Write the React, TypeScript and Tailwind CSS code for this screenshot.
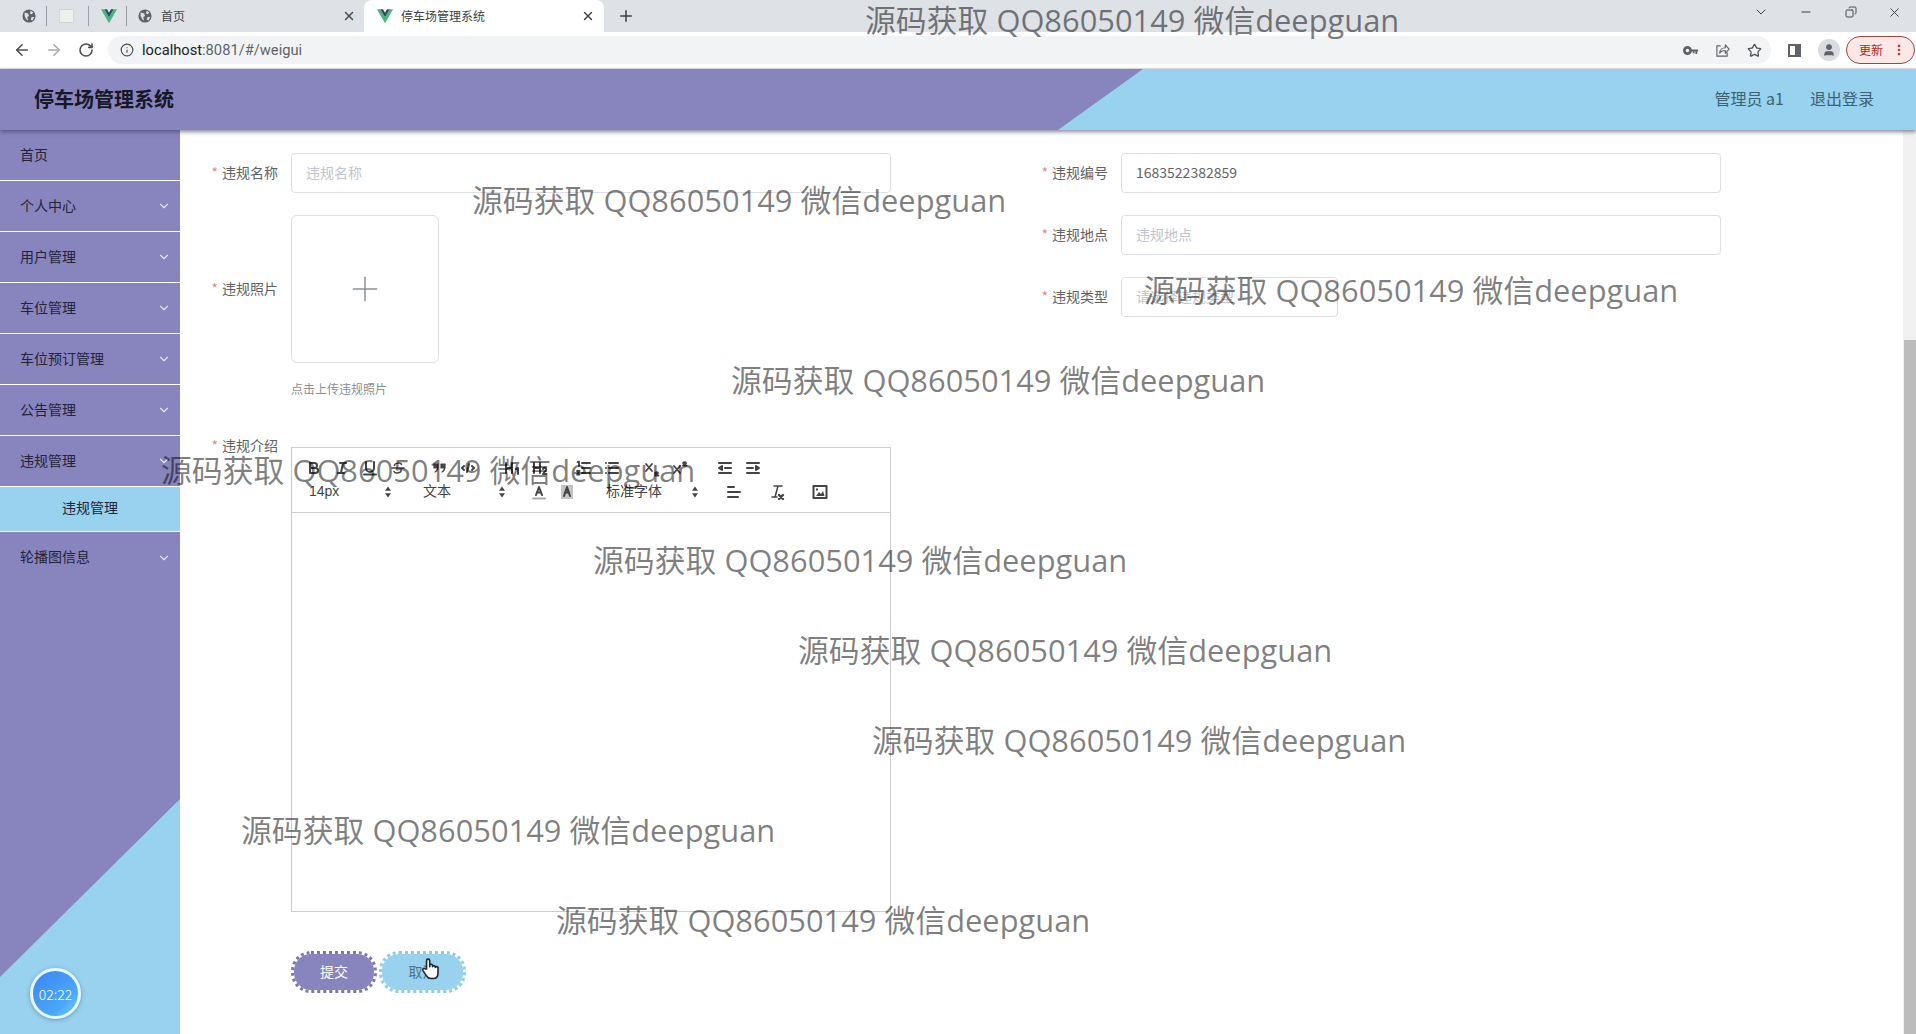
import { ArrowLeft, ArrowRight, ChevronDown, Copy, Info, Minus, MoreVertical, Plus, RotateCw, Star, User, X } from "lucide-react";

const watermarks = [
  { x: 865, y: 1 },
  { x: 161, y: 91 },
  { x: 472, y: 181 },
  { x: 1144, y: 271 },
  { x: 731, y: 361 },
  { x: 161, y: 451 },
  { x: 593, y: 541 },
  { x: 798, y: 631 },
  { x: 872, y: 721 },
  { x: 241, y: 811 },
  { x: 556, y: 901 },
];

const menu = ["个人中心", "用户管理", "车位管理", "车位预订管理", "公告管理", "违规管理"];

function Globe() {
  return (
    <svg viewBox="0 0 16 16" className="w-[14px] h-[14px]">
      <circle cx="8" cy="8" r="7.5" fill="#5f6368" />
      <path d="M3 4l4 1 1 3-2 1 1 4-2-1-2-4zM10 2l3 2-2 2-2-1zM11 9l3 0-2 4-2-1z" fill="#dee1e6" />
    </svg>
  );
}

function VueLogo() {
  return (
    <svg viewBox="0 0 24 22" className="w-4 h-4">
      <path d="M0 1h5l7 12 7-12h5L12 22z" fill="#41b883" />
      <path d="M5 1h4l3 5 3-5h4l-7 12z" fill="#34495e" />
    </svg>
  );
}

function Tabs() {
  return (
    <div className="h-8 bg-[#dee1e6] flex items-center relative">
      <div className="w-[56px] flex justify-end pr-[9px]">
        <div className="flex items-center gap-[10px]">
          <Globe />
          <div className="w-px h-5 bg-[#9aa0a6]" />
        </div>
      </div>
      <div className="w-[33px] flex items-center justify-between pl-[3px]">
        <div className="w-[15px] h-[14px] bg-[#eef0ee] border border-[#d4d6d4]" />
        <div className="w-px h-5 bg-[#9aa0a6]" />
      </div>
      <div className="w-[38px] flex items-center justify-between pl-[12px]">
        <VueLogo />
        <div className="w-px h-5 bg-[#9aa0a6]" />
      </div>
      <div className="w-[237px] flex items-center pl-[11px] text-xs text-[#45474a]">
        <Globe />
        <span className="ml-[9px] flex-1">首页</span>
        <X className="w-[14px] h-[14px] mr-[8px]" strokeWidth={2.5} />
      </div>
      <div className="w-[240px] h-8 bg-white rounded-t-lg flex items-center pl-[13px] text-xs text-[#3c4043]">
        <VueLogo />
        <span className="ml-[8px] flex-1">停车场管理系统</span>
        <X className="w-[14px] h-[14px] mr-[9px]" strokeWidth={2.5} />
      </div>
      <Plus className="w-[18px] h-[18px] ml-[13px] text-[#3c4043]" strokeWidth={2} />
      <div className="ml-auto flex items-center text-[#3c4043] h-full pb-2">
        <ChevronDown className="w-4 h-4 mr-[30px]" strokeWidth={1.5} />
        <Minus className="w-[14px] h-[14px] mr-[32px]" strokeWidth={1.8} />
        <Copy className="w-3 h-3 mr-[30px] -scale-x-100" strokeWidth={1.8} />
        <X className="w-[15px] h-[15px] mr-[14px]" strokeWidth={1.5} />
      </div>
    </div>
  );
}

function Toolbar() {
  return (
    <div className="h-[37px] bg-white border-b border-[#dfe1e5] flex items-center text-[#5f6368]">
      <ArrowLeft className="w-[18px] h-[18px] ml-[13px] text-[#4c5054]" strokeWidth={2.2} />
      <ArrowRight className="w-[18px] h-[18px] ml-[14px] text-[#a8abaf]" strokeWidth={2.2} />
      <RotateCw className="w-4 h-4 ml-[15px] text-[#4c5054]" strokeWidth={2.4} />
      <div className="ml-[14px] w-[1663px] h-7 rounded-full bg-[#f1f3f4] flex items-center pl-[12px]">
        <Info className="w-[14px] h-[14px] text-[#4c5054]" strokeWidth={2} />
        <span className="ml-[8px] text-[14.7px] text-[#202124] font-['Roboto',sans-serif]">
          localhost<span className="text-[#5f6368]">:8081/#/weigui</span>
        </span>
        <div className="ml-auto flex items-center pr-[9px]">
          <svg viewBox="0 0 18 12" className="w-[16px] h-[11px] mr-[16px]">
            <circle cx="5" cy="6" r="3.500" fill="none" stroke="#5f6368" strokeWidth="3" />
            <path d="M8 5h9v2h-1v3h-2V7h-1v2h-2V7H8z" fill="#5f6368" />
          </svg>
          <svg viewBox="0 0 16 16" className="w-[15px] h-[15px] mr-[17px]" fill="none" stroke="#5f6368" strokeWidth="1.200">
            <path d="M6 3H2v11h11v-4M5 11c0-4 3-6 6-6V2l4 4.500-4 4.500V8c-3 0-5 1-6 3z" strokeLinejoin="round" />
          </svg>
          <Star className="w-[15px] h-[15px] text-[#4c5054]" strokeWidth={2} />
        </div>
      </div>
      <div className="ml-[17px] w-[13px] h-[13px] border-[2px] border-[#5f6368] border-r-[6px]" />
      <div className="ml-[17px] w-[22px] h-[22px] rounded-full bg-[#dadce0] flex items-center justify-center">
        <User className="w-[14px] h-[14px] text-[#5f6368] fill-[#5f6368]" />
      </div>
      <div className="ml-[6px] w-[69px] h-7 rounded-full bg-[#fce8e6] border border-[#a5443a] flex items-center pl-[12px] text-xs text-[#b3261e]">
        更新
        <MoreVertical className="w-[14px] h-[14px] ml-[9px] text-[#a5443a]" strokeWidth={2.5} />
      </div>
    </div>
  );
}

function Header() {
  return (
    <div className="h-[61px] bg-[#8884bd] relative flex items-center justify-between shadow-[0_2px_4px_rgba(60,60,90,0.6)] z-10">
      <div className="absolute inset-0 bg-[#98d2ee] [clip-path:polygon(1143px_0,100%_0,100%_100%,1058px_100%)]" />
      <div className="relative pl-[34px] pb-[2px] text-xl font-bold text-[#171728]">停车场管理系统</div>
      <div className="relative pr-[42px] pb-[3px] flex gap-[26px] text-base text-[#3d6273]">
        <span>管理员 a1</span>
        <span>退出登录</span>
      </div>
    </div>
  );
}

function Sidebar() {
  return (
    <div className="w-[180px] shrink-0 bg-[#8884bd] relative text-sm text-[#23233c]">
      <div className="absolute inset-0 bg-[#98d2ee] [clip-path:polygon(180px_669px,0_847px,0_904px,180px_904px)]" />
      <div className="relative">
        <div className="h-[51px] flex items-center pl-5 border-b border-white">
          <span className="-mt-[3px]">首页</span>
        </div>
        {menu.map((m) => (
          <div key={m} className="h-[51px] flex items-center justify-between pl-5 pr-[9px] border-b border-white last:border-b-0">
            <span className="-mt-[3px]">{m}</span>
            <ChevronDown className="w-[14px] h-[14px] text-[#e4e4f4]" strokeWidth={2} />
          </div>
        ))}
        <div className="h-[45px] flex items-center justify-center bg-[#98d2ee] border-b border-white">
          <span className="-mt-[5px]">违规管理</span>
        </div>
        <div className="h-[51px] flex items-center justify-between pl-5 pr-[9px]">
          <span className="-mt-[4px]">轮播图信息</span>
          <ChevronDown className="w-[14px] h-[14px] text-[#e4e4f4]" strokeWidth={2} />
        </div>
      </div>
      <div className="absolute left-[30px] top-[838px] w-[51px] h-[51px] rounded-full border-[3px] border-[#e6f6fb] bg-[linear-gradient(135deg,#3a84f2,#4aa8fa_70%,#7cc8fb)] shadow-[0_1px_4px_rgba(60,100,140,0.5)] flex items-center justify-center text-sm font-light text-white">
        02:22
      </div>
    </div>
  );
}

function FormRow({ label, top, children }: { label: string; top?: boolean; children: React.ReactNode }) {
  return (
    <div className={`flex ${top ? "items-start" : "items-center"}`}>
      <label className={`w-[98px] shrink-0 text-right text-sm text-[#606266] ${top ? "-mt-[12px]" : "pb-[3px]"}`}>
        <span className="text-[#e08a8a] mr-1">*</span>
        {label}
      </label>
      <div className="ml-[13px]">{children}</div>
    </div>
  );
}

function TextBox({ width, placeholder, value }: { width: string; placeholder?: string; value?: string }) {
  return (
    <div className={`${width} h-10 rounded border border-[#dcdfe6] bg-white flex items-center pl-[14px] pb-[3px] text-sm`}>
      {value ? <span className="text-[#606266]">{value}</span> : <span className="text-[#c0c4cc]">{placeholder}</span>}
    </div>
  );
}

function Q({ children, className = "" }: { children: React.ReactNode; className?: string }) {
  return (
    <svg
      viewBox="0 0 18 18"
      fill="none"
      stroke="#444"
      strokeWidth="2"
      strokeLinecap="round"
      strokeLinejoin="round"
      className={`w-[28px] h-6 py-[3px] px-[5px] ${className}`}
    >
      {children}
    </svg>
  );
}

function Picker({ label, width }: { label: string; width: string }) {
  return (
    <div className={`${width} h-6 flex items-center justify-between pl-[9px] pr-[1px] text-sm text-[#444] font-['Liberation_Sans','Noto_Sans_CJK_SC',sans-serif]`}>
      <span className="pb-[2px]">{label}</span>
      <svg viewBox="0 0 18 18" className="w-[18px] h-[18px]" fill="#444">
        <polygon points="9 3.500 12 7.800 6 7.800" />
        <polygon points="9 14.500 12 10.200 6 10.200" />
      </svg>
    </div>
  );
}

function Editor() {
  return (
    <div className="w-[600px] h-[465px] border border-[#ccc] flex flex-col">
      <div className="h-[65px] border-b border-[#ccc] p-2 shrink-0">
        <div className="flex h-6 items-center">
          <Q>
            <path d="M5 4h4.500a2.500 2.500 0 0 1 0 5H5zM5 9h5.500a2.500 2.500 0 0 1 0 5H5z" />
          </Q>
          <Q>
            <path d="M7 4h6M5 14h6M8 14l2-10" />
          </Q>
          <Q>
            <path d="M5 3v6a4 4 0 0 0 8 0V3M3 15.500h12" />
          </Q>
          <Q>
            <path d="M3 9h12M5.500 6.500C5.500 4 12 3 12.500 5.500M12 11c1 3-6 4-7 1.500" strokeWidth="1.500" />
          </Q>
          <Q className="ml-[14px]">
            <path d="M3 5h4v4H3zM10 5h4v4h-4zM7 8c0 3-1 4-3 5M14 8c0 3-1 4-3 5" fill="#444" strokeWidth="1.200" />
          </Q>
          <Q>
            <path d="M5 7 3 9l2 2M13 7l2 2-2 2M10 5 8 13" />
          </Q>
          <Q className="ml-4">
            <path d="M3 4v10M9 4v10M3 9h6M13 10l2-1v6" />
          </Q>
          <Q>
            <path d="M3 4v10M9 4v10M3 9h6M12 10c1-2 4-1 3 1l-3 4h3.500" />
          </Q>
          <Q className="ml-4">
            <path d="M7 4h8M7 9h8M7 14h8M2.500 3 4 2.500V7M2 12h2.500L2 15.500h2.500" strokeWidth="1.800" />
          </Q>
          <Q>
            <path d="M6 4h9M6 9h9M6 14h9M3 4h0M3 9h0M3 14h0" />
          </Q>
          <Q className="ml-3">
            <path d="M3 5l6 7M9 5l-6 7M12 14c1-1.500 3-1 3 0l-3 2.500h3.500" strokeWidth="1.800" />
          </Q>
          <Q>
            <path d="M3 7l6 7M9 7l-6 7M12 4c1-1.500 3-1 3 0l-3 2.500h3.500" strokeWidth="1.800" />
          </Q>
          <Q className="ml-[17px]">
            <path d="M3 14h12M3 4h12M9 9h6M6 7 3 9l3 2z" fill="#444" />
          </Q>
          <Q>
            <path d="M3 14h12M3 4h12M3 9h6M12 7l3 2-3 2z" fill="#444" />
          </Q>
        </div>
        <div className="flex h-6 items-center">
          <Picker label="14px" width="w-[98px]" />
          <Picker label="文本" width="w-[98px] ml-4" />
          <Q className="ml-[13px]">
            <path d="M6 12 9 4l3 8M7 9.500h4" strokeWidth="2" />
            <path d="M3 15.500h12" stroke="#aaa" />
          </Q>
          <Q>
            <rect x="3" y="2" width="12" height="14" fill="#c4c4c4" stroke="none" />
            <path d="M6 13 9 4l3 9M7 9.500h4" strokeWidth="2" />
          </Q>
          <Picker label="标准字体" width="w-[108px] ml-[16px]" />
          <Q className="ml-[15px]">
            <path d="M3 4h6M3 9h12M3 14h10" />
          </Q>
          <Q className="ml-[14px]">
            <path d="M7 3h8M11 3 8 14M5 14h5" strokeWidth="1.500" />
            <path d="M12 12l4 4M16 12l-4 4" strokeWidth="2.400" />
          </Q>
          <Q className="ml-[16px]">
            <rect x="2.500" y="3" width="13" height="12" fill="#fff" />
            <path d="M5 13l3-4 2 2 2-3 1.500 5zM5 5.500h2v2H5z" fill="#444" stroke="none" />
          </Q>
        </div>
      </div>
    </div>
  );
}

function HandCursor() {
  return (
    <svg viewBox="0 0 24 28" className="absolute left-[39px] top-[3px] w-[19px] h-[24px]">
      <path
        d="M7 14V3.500a2 2 0 0 1 4 0V11l0-2a2 2 0 0 1 3.500 0V11a2 2 0 0 1 3.500 0v1a2 2 0 0 1 3.500 0v7c0 4-2 7-6 7h-3c-3 0-4-1-6-4l-4-6c-1-2 1-4 3-2z"
        fill="#fff"
        stroke="#1d2733"
        strokeWidth="2"
        strokeLinejoin="round"
      />
    </svg>
  );
}

export default function App() {
  return (
    <div className="h-screen overflow-hidden flex flex-col relative bg-white font-['Noto_Sans_CJK_SC',sans-serif]">
      <Tabs />
      <Toolbar />
      <Header />
      <div className="flex flex-1 min-h-0">
        <Sidebar />
        <div className="flex-1 flex pt-[23px]">
          <div className="w-[830px] flex flex-col">
            <div className="flex flex-col gap-[22px]">
              <FormRow label="违规名称">
                <TextBox width="w-[600px]" placeholder="违规名称" />
              </FormRow>
              <FormRow label="违规照片">
                <div className="w-[148px] h-[148px] rounded-md border border-[#dcdfe6] flex items-center justify-center">
                  <Plus className="w-10 h-10 text-[#8c939d]" strokeWidth={0.9} />
                </div>
              </FormRow>
            </div>
            <div className="pl-[111px] mt-[18px] text-xs text-[#8c8f94]">点击上传违规照片</div>
            <div className="mt-[50px]">
              <FormRow label="违规介绍" top>
                <Editor />
              </FormRow>
            </div>
            <div className="pl-[111px] mt-[39px] flex gap-[2px] text-sm">
              <div className="w-[86px] h-[42px] rounded-[20px] bg-[#8884bd] bg-clip-padding border-[3px] border-dotted border-[#7a76b0] flex items-center justify-center pb-[3px] text-white">
                提交
              </div>
              <div className="w-[87px] h-[42px] rounded-[20px] bg-[#98d2ee] bg-clip-padding border-[3px] border-dotted border-[#8accea] flex items-center justify-center pb-[3px] text-[#4f7386] relative">
                取消
                <HandCursor />
              </div>
            </div>
          </div>
          <div className="flex flex-col gap-[22px]">
            <FormRow label="违规编号">
              <TextBox width="w-[600px]" value="1683522382859" />
            </FormRow>
            <FormRow label="违规地点">
              <TextBox width="w-[600px]" placeholder="违规地点" />
            </FormRow>
            <FormRow label="违规类型">
              <TextBox width="w-[217px]" placeholder="请选择违规类型" />
            </FormRow>
          </div>
        </div>
        <div className="w-[13px] shrink-0 bg-[#f1f1f1] pl-px flex flex-col">
          <div className="h-[210px]" />
          <div className="flex-1 bg-[#bcbcbc]" />
        </div>
      </div>
      {watermarks.map((w) => (
        <div
          key={`${w.x}-${w.y}`}
          className="absolute whitespace-nowrap text-[30.85px] leading-[38px] font-normal text-black/50 font-['Open_Sans','Noto_Sans_CJK_SC',sans-serif]"
          style={{ left: w.x, top: w.y }}
        >
          源码获取 QQ86050149 微信deepguan
        </div>
      ))}
    </div>
  );
}
